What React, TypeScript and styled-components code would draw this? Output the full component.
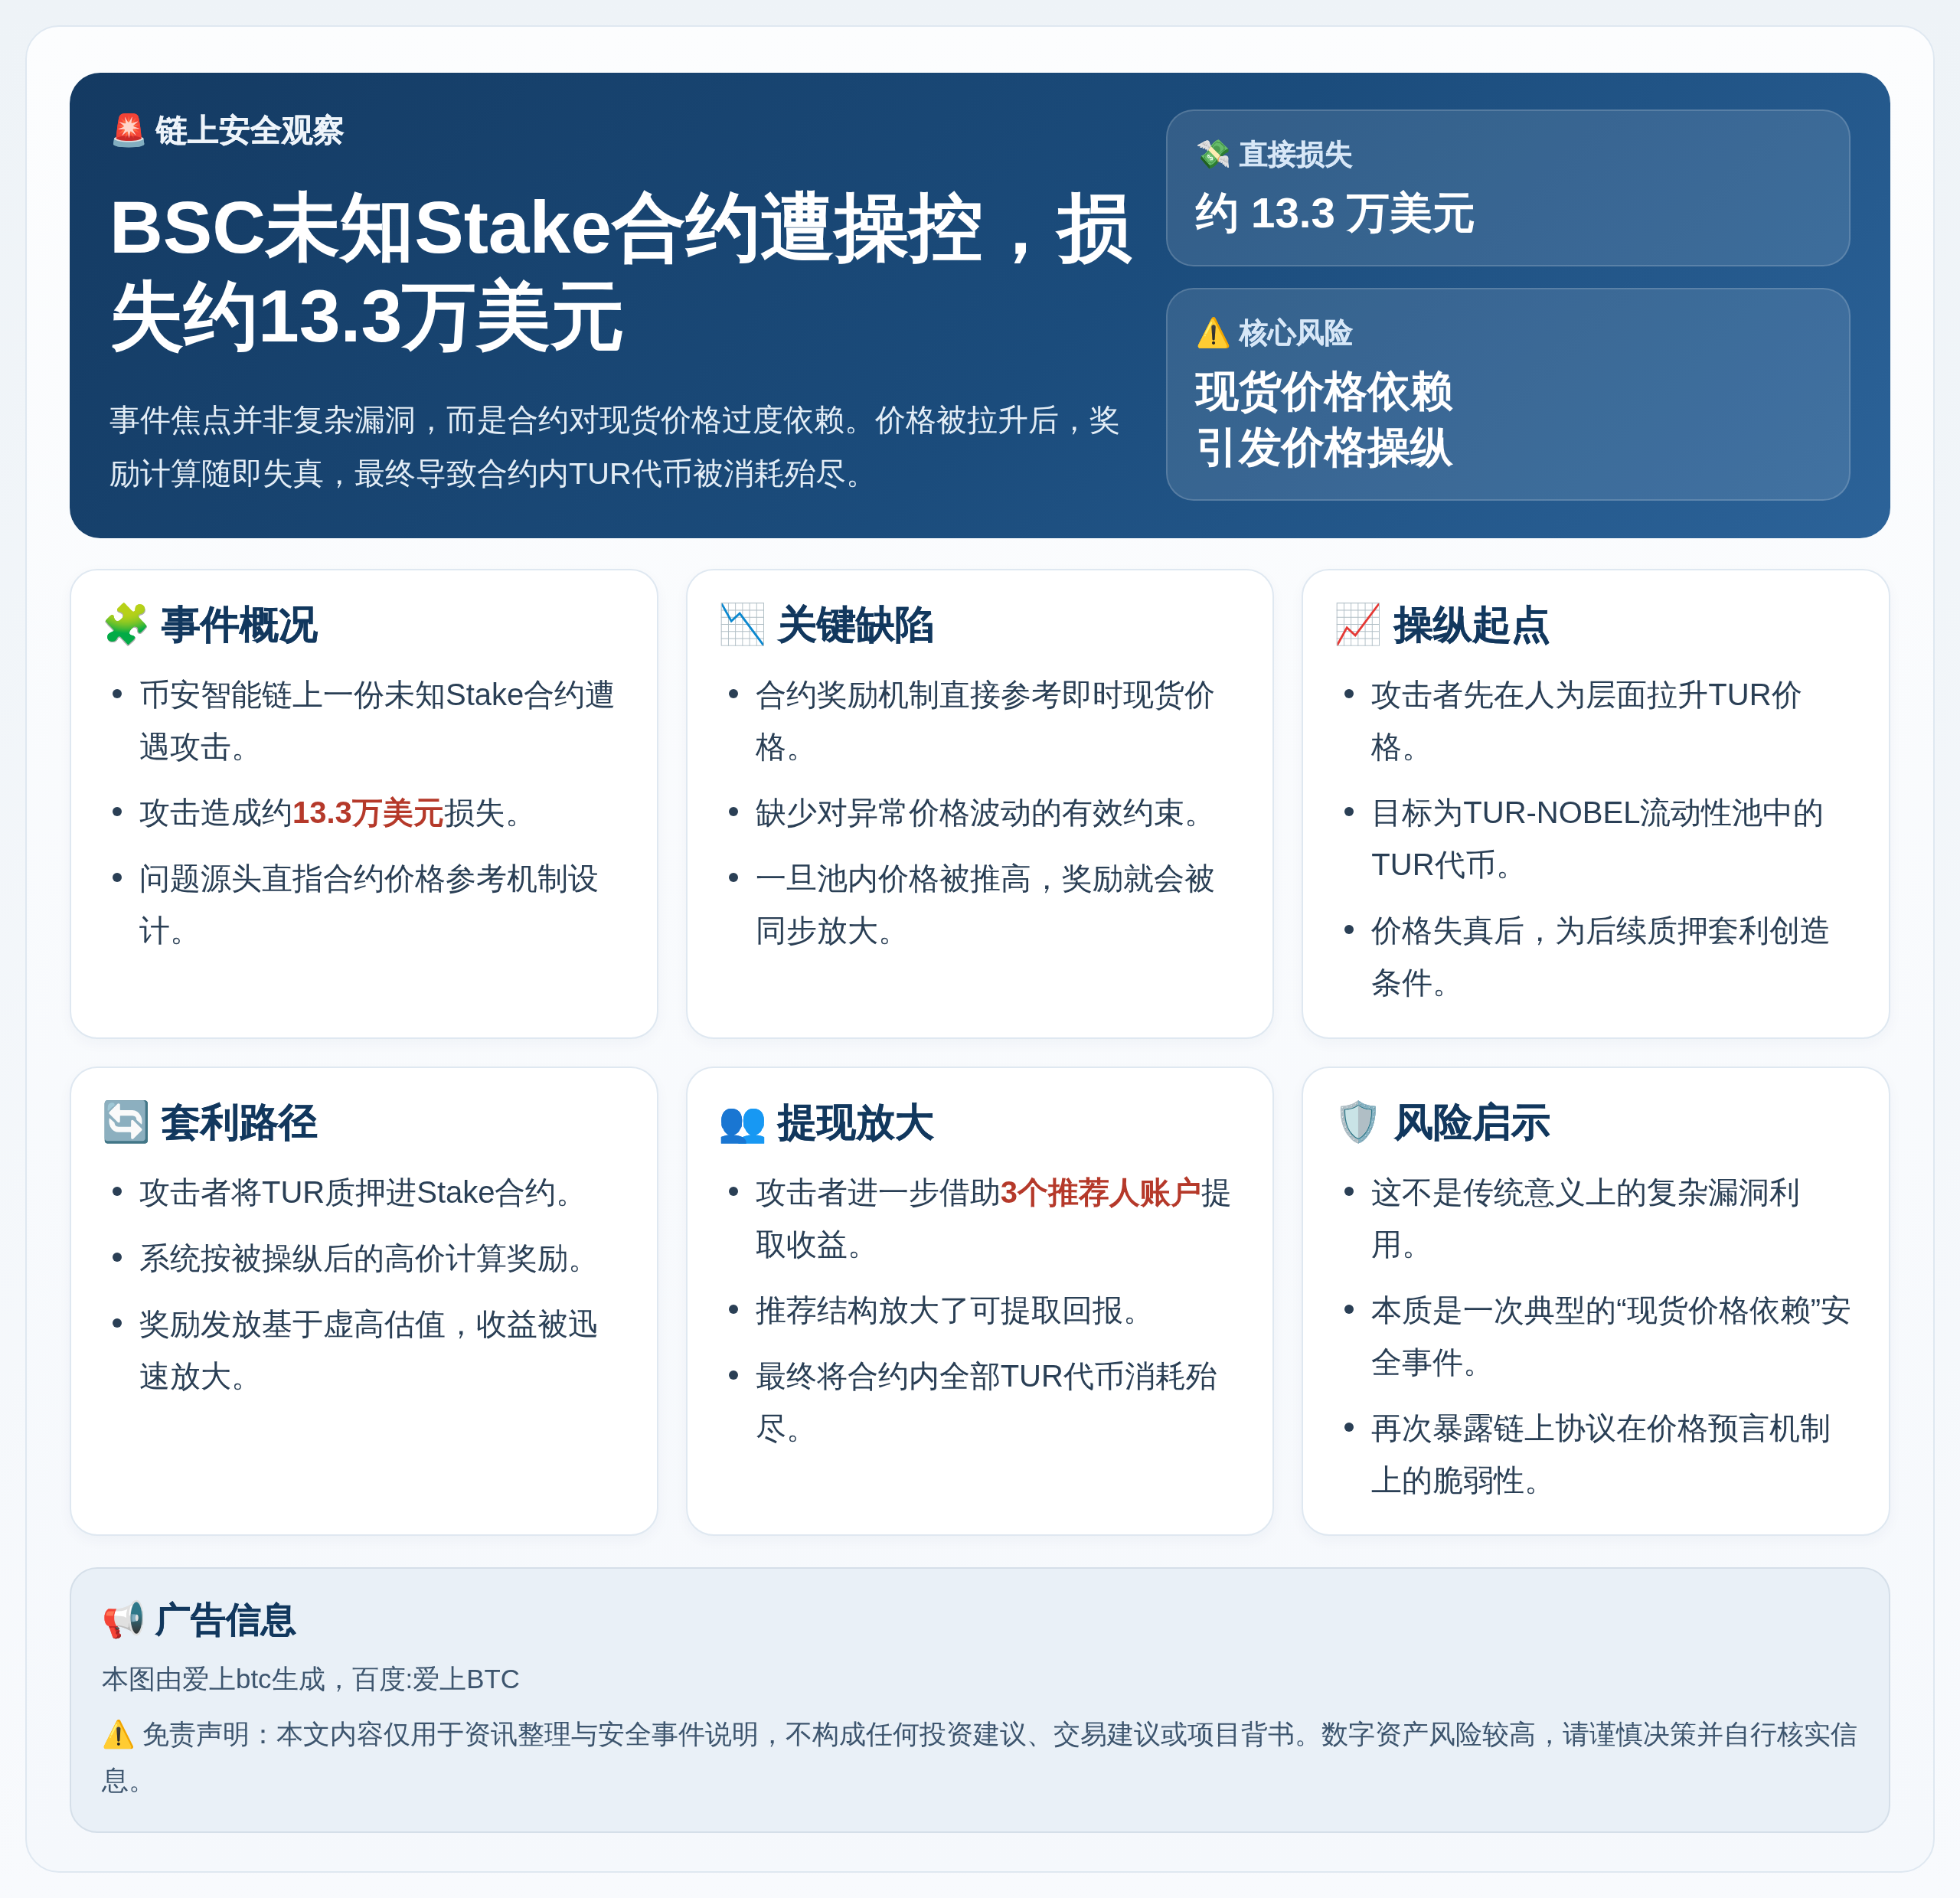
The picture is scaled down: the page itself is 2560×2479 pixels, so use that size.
import React from "react";
import styled, { createGlobalStyle } from "styled-components";

const Global = createGlobalStyle`
  * { box-sizing: border-box; }
  html, body { margin: 0; padding: 0; }
  body {
    font-family: "Liberation Sans", sans-serif;
    color: #23384f;
  }
`;

const Page = styled.div`
  min-height: 100vh;
  padding: 33px 33px 34px;
  background: linear-gradient(180deg, #eef3f7 0%, #f8fafd 100%);
  filter: blur(0.5px);
`;
const Sheet = styled.main`
  border: 2px solid #dfe8f1;
  border-radius: 44px;
  background: linear-gradient(180deg, #fcfdfe 0%, #f5f8fc 100%);
  padding: 60px 56px 50px;
  display: flex;
  flex-direction: column;
  gap: 40px;
`;
const Hero = styled.header`
  display: grid;
  grid-template-columns: 1.5fr 1fr;
  gap: 40px;
  padding: 48px 52px 49px;
  border-radius: 40px;
  background: linear-gradient(135deg, #143a62 0%, #1b4c7c 55%, #2c6399 100%);
  color: #fff;
`;
const Lead = styled.div`
  min-width: 0;
`;
const Kicker = styled.div`
  font-size: 40.5px;
  font-weight: 700;
  line-height: 54px;
  color: #eef4fa;
  -webkit-text-stroke: 0.4px #eef4fa;
`;
const Title = styled.h1`
  margin: 41px 0 43px;
  font-size: 96.7px;
  line-height: 116px;
  font-weight: 800;
`;
const Summary = styled.p`
  margin: 0;
  font-size: 39.7px;
  line-height: 70px;
  color: #e3edf6;
`;
const Side = styled.aside`
  display: flex;
  flex-direction: column;
  gap: 28px;
`;
const Stat = styled.div`
  padding: 32px 36px 32px 37px;
  border: 2px solid rgba(255, 255, 255, 0.16);
  border-radius: 36px;
  background: rgba(255, 255, 255, 0.11);
`;
const StatLabel = styled.div`
  font-size: 36.8px;
  line-height: 50px;
  font-weight: 700;
  color: #d7e7f7;
  margin-bottom: 14px;
  -webkit-text-stroke: 0.4px #d7e7f7;
`;
const StatValue = styled.div`
  font-size: 56.4px;
  line-height: 73px;
  font-weight: 700;
`;
const Grid = styled.section`
  display: grid;
  grid-template-columns: repeat(3, 1fr);
  gap: 36px;
`;
const Card = styled.article`
  height: 613.5px;
  padding: 35px 40px;
  border: 2px solid #dfe8f1;
  border-radius: 36px;
  background: #fff;
  box-shadow: 0 6px 18px rgba(30, 60, 100, 0.04);
`;
const CardTitle = styled.h2`
  margin: 0 0 21px;
  font-size: 51.2px;
  line-height: 72px;
  font-weight: 700;
  color: #12385e;
  -webkit-text-stroke: 0.4px #12385e;
`;
const List = styled.ul`
  margin: 0;
  padding-left: 49px;
  list-style: none;
`;
const Item = styled.li`
  position: relative;
  font-size: 40px;
  line-height: 68px;
  margin-bottom: 18px;
  color: #2a3f55;
  &::before {
    content: "";
    position: absolute;
    left: -35px;
    top: 27px;
    width: 12px;
    height: 12px;
    border-radius: 50%;
    background: #2a3f55;
  }
`;
const Hot = styled.strong`
  color: #b5392a;
`;
const Notice = styled.footer`
  margin-top: 1px;
  padding: 30px 40px 37px;
  border: 2px solid #d5dfe9;
  border-radius: 36px;
  background: #e9f0f7;
`;
const NoticeTitle = styled.h3`
  margin: 0 0 12px;
  font-size: 46px;
  line-height: 72px;
  font-weight: 700;
  color: #12385e;
  -webkit-text-stroke: 0.4px #12385e;
`;
const NoticeText = styled.p`
  margin: 0 0 12px;
  font-size: 34.9px;
  line-height: 60px;
  color: #3d556e;
  &:last-child { margin-bottom: 0; }
`;

const cards: { t: string; i: React.ReactNode[] }[] = [
  { t: "🧩 事件概况", i: ["币安智能链上一份未知Stake合约遭遇攻击。", <>攻击造成约<Hot>13.3万美元</Hot>损失。</>, "问题源头直指合约价格参考机制设计。"] },
  { t: "📉 关键缺陷", i: ["合约奖励机制直接参考即时现货价格。", "缺少对异常价格波动的有效约束。", "一旦池内价格被推高，奖励就会被同步放大。"] },
  { t: "📈 操纵起点", i: ["攻击者先在人为层面拉升TUR价格。", "目标为TUR-NOBEL流动性池中的TUR代币。", "价格失真后，为后续质押套利创造条件。"] },
  { t: "🔄 套利路径", i: ["攻击者将TUR质押进Stake合约。", "系统按被操纵后的高价计算奖励。", "奖励发放基于虚高估值，收益被迅速放大。"] },
  { t: "👥 提现放大", i: [<>攻击者进一步借助<Hot>3个推荐人账户</Hot>提取收益。</>, "推荐结构放大了可提取回报。", "最终将合约内全部TUR代币消耗殆尽。"] },
  { t: "🛡️ 风险启示", i: ["这不是传统意义上的复杂漏洞利用。", "本质是一次典型的“现货价格依赖”安全事件。", "再次暴露链上协议在价格预言机制上的脆弱性。"] },
];

export default function App() {
  return (
    <Page>
      <Global />
      <Sheet>
        <Hero>
          <Lead>
            <Kicker>🚨 链上安全观察</Kicker>
            <Title>BSC未知Stake合约遭操控，损失约13.3万美元</Title>
            <Summary>事件焦点并非复杂漏洞，而是合约对现货价格过度依赖。价格被拉升后，奖励计算随即失真，最终导致合约内TUR代币被消耗殆尽。</Summary>
          </Lead>
          <Side>
            <Stat>
              <StatLabel>💸 直接损失</StatLabel>
              <StatValue>约 13.3 万美元</StatValue>
            </Stat>
            <Stat>
              <StatLabel>⚠️ 核心风险</StatLabel>
              <StatValue>现货价格依赖<br />引发价格操纵</StatValue>
            </Stat>
          </Side>
        </Hero>
        <Grid>
          {cards.map((c) => (
            <Card key={c.t}>
              <CardTitle>{c.t}</CardTitle>
              <List>
                {c.i.map((x, n) => <Item key={n}>{x}</Item>)}
              </List>
            </Card>
          ))}
        </Grid>
        <Notice>
          <NoticeTitle>📢 广告信息</NoticeTitle>
          <NoticeText>本图由爱上btc生成，百度:爱上BTC</NoticeText>
          <NoticeText>⚠️ 免责声明：本文内容仅用于资讯整理与安全事件说明，不构成任何投资建议、交易建议或项目背书。数字资产风险较高，请谨慎决策并自行核实信息。</NoticeText>
        </Notice>
      </Sheet>
    </Page>
  );
}
